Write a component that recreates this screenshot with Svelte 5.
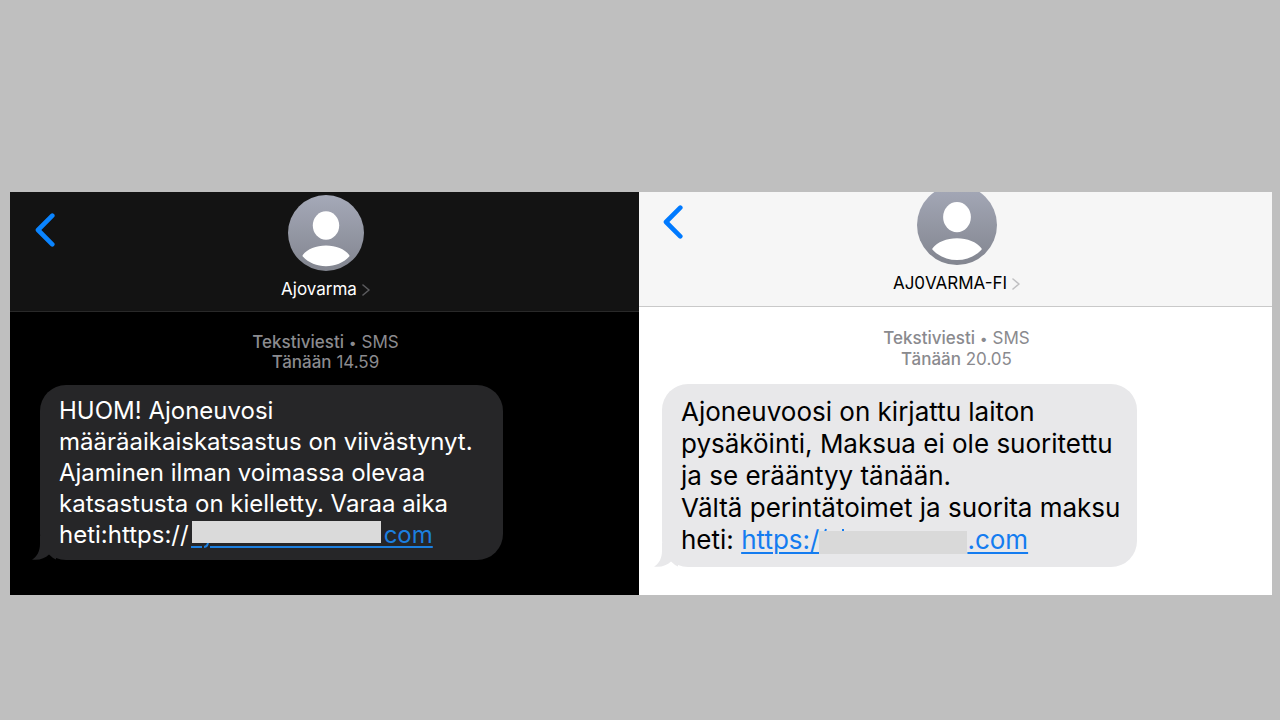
<script>
  const threads = [
    {
      theme: 'dark',
      sender: 'Ajovarma',
      time: '14.59',
      lines: [
        'HUOM! Ajoneuvosi',
        'määräaikaiskatsastus on viivästynyt.',
        'Ajaminen ilman voimassa olevaa',
        'katsastusta on kielletty. Varaa aika'
      ],
      lead: 'heti:https://',
      linkStart: '',
      linkEnd: 'com'
    },
    {
      theme: 'light',
      sender: 'AJ0VARMA-FI',
      time: '20.05',
      lines: [
        'Ajoneuvoosi on kirjattu laiton',
        'pysäköinti, Maksua ei ole suoritettu',
        'ja se erääntyy tänään.',
        'Vältä perintätoimet ja suorita maksu'
      ],
      lead: 'heti: ',
      linkStart: 'https:/',
      linkEnd: '.com'
    }
  ]
</script>

<main>
  {#each threads as thread}
    <section class="thread {thread.theme}">
      <header>
        <button class="back" aria-label="Takaisin">
          <svg viewBox="0 0 20 34" width="20" height="34">
            <path d="M17.3 2.7 3 17l14.3 14.3" />
          </svg>
        </button>
        <button class="contact">
          <svg class="avatar" viewBox="0 0 76 76">
            <defs>
              <linearGradient id="shade-{thread.theme}" x1="0" y1="0" x2="0" y2="1">
                <stop offset="0" stop-color="#a5a9b8" />
                <stop offset="1" stop-color="#82858f" />
              </linearGradient>
            </defs>
            <circle cx="38" cy="38" r="38" fill="url(#shade-{thread.theme})" />
            <ellipse cx="38" cy="30.5" rx="13.2" ry="14.3" fill="#fff" />
            <path d="M14.8 60C19.5 54 28 50.5 38 50.5S56.5 54 61.2 60Q61.8 61 61.2 61.6C55.5 67.8 47 71.3 38 71.3S20.5 67.8 14.8 61.6Q14.2 61 14.8 60Z" fill="#fff" />
          </svg>
          <span class="name">
            {thread.sender}
            <svg class="chevron" viewBox="0 0 8 12" width="8" height="12">
              <path d="M1 1l6 5-6 5" />
            </svg>
          </span>
        </button>
      </header>

      <p class="stamp">
        <b>Tekstiviesti</b> <span class="dot">•</span> SMS<br />
        <b>Tänään</b> {thread.time}
      </p>

      <div class="bubble">
        {#each thread.lines as line}
          <span class="line">{line}</span>
        {/each}
        <span class="line">{thread.lead}<a href="#message">{thread.linkStart}<span class="redacted">
          {#if thread.theme === 'dark'}
            <svg viewBox="0 0 195 30" width="195" height="30">
              <path class="stroke" d="M2 28h11M21 28h174" />
              <path class="stroke" d="M19 23q0 4.500-4 5" />
              <rect x="3" y="2" width="189" height="22" />
            </svg>
          {:else}
            <svg viewBox="0 0 148 30" width="148" height="30">
              <path class="stroke" d="M7 5l-1 3M24 5v3" />
              <rect y="7" width="148" height="23" />
            </svg>
          {/if}
        </span>{thread.linkEnd}</a></span>
        <svg class="tail" viewBox="0 0 24 24" width="24" height="24">
          <path d="M8 0v8c0 7-3 13-8 15.5 7 1 13-1 17-5q4 4 7 5V0z" />
        </svg>
      </div>
    </section>
  {/each}
</main>

<style>
  :global(body) {
    background: #bfbfbf;
    font-family: Inter, "Liberation Sans", sans-serif;
  }

  main {
    display: flex;
    padding: 192px 8px 0 10px;
  }

  .thread {
    min-width: 0;
    overflow: hidden;
    background: var(--page);
  }

  .dark {
    flex: 629 1 0;
    --page: #000;
    --bar: #131313;
    --rule: #292929;
    --ink: #fff;
    --bubble: #262628;
    --muted: #8b8b8f;
    --arrow: #5b5b5e;
    --blue: #0a84ff;
    --link: #1c7fdf;
    --avatar: 76px;
    --cover: #dadada;
  }

  .light {
    flex: 633 1 0;
    --page: #fff;
    --bar: #f6f6f6;
    --rule: #c9c9c9;
    --ink: #000;
    --bubble: #e8e8ea;
    --muted: #8a8a8e;
    --arrow: #c0c0c2;
    --blue: #007aff;
    --link: #147cf0;
    --avatar: 80px;
    --cover: #d9d9d9;
  }

  header {
    display: grid;
    grid-template-columns: 72px 1fr 70px;
    align-items: start;
    background: var(--bar);
    border-bottom: 1px solid var(--rule);
  }

  .dark header {
    padding: 3px 0 11px;
  }

  .light header {
    padding-bottom: 12px;
  }

  button {
    padding: 0;
    border: 0;
    background: none;
    font: inherit;
    cursor: pointer;
  }

  .back {
    display: flex;
    margin: 18px 0 0 25px;
  }

  .light .back {
    margin-top: 13px;
    margin-left: 24px;
  }

  .back path {
    fill: none;
    stroke: var(--blue);
    stroke-width: 4.6;
    stroke-linecap: round;
    stroke-linejoin: round;
  }

  .contact {
    display: flex;
    flex-direction: column;
    align-items: center;
    gap: 8px;
    color: var(--ink);
  }

  .light .contact {
    margin-top: -7px;
  }

  .avatar {
    width: var(--avatar);
    height: var(--avatar);
  }

  .name {
    display: flex;
    align-items: center;
    gap: 5px;
    font-size: 17px;
    line-height: 21px;
  }

  .chevron path {
    fill: none;
    stroke: var(--arrow);
    stroke-width: 1.6;
    stroke-linecap: round;
    stroke-linejoin: round;
  }

  .stamp {
    margin: 20px 0 13px;
    padding-left: 2px;
    color: var(--muted);
    font-size: 17px;
    line-height: 20px;
    text-align: center;
  }

  .light .stamp {
    margin: 21px 0 14px;
    line-height: 21px;
  }

  .stamp b {
    font-weight: 500;
  }

  .dot {
    font-size: 14px;
    line-height: 14px;
  }

  .bubble {
    position: relative;
    width: fit-content;
    box-sizing: border-box;
    min-width: 463px;
    margin: 0 0 35px 30px;
    padding: 10px 19px;
    border-radius: 26px;
    background: var(--bubble);
    color: var(--ink);
    font-size: 24px;
    line-height: 31px;
    white-space: nowrap;
  }

  .light .bubble {
    min-width: 475px;
    margin: 0 0 28px 23px;
    padding: 12px 16px 11px 19px;
    font-size: 26px;
    line-height: 32px;
  }

  .line {
    display: block;
  }

  a {
    color: var(--link);
    text-decoration-thickness: 2px;
    text-underline-offset: 3px;
  }

  .redacted {
    display: inline-flex;
    height: 30px;
    vertical-align: top;
  }

  .redacted rect {
    fill: var(--cover);
  }

  .stroke {
    fill: none;
    stroke: var(--link);
    stroke-width: 2;
  }

  .tail {
    position: absolute;
    left: -8px;
    bottom: 0;
  }

  .tail path {
    fill: var(--bubble);
  }
</style>
